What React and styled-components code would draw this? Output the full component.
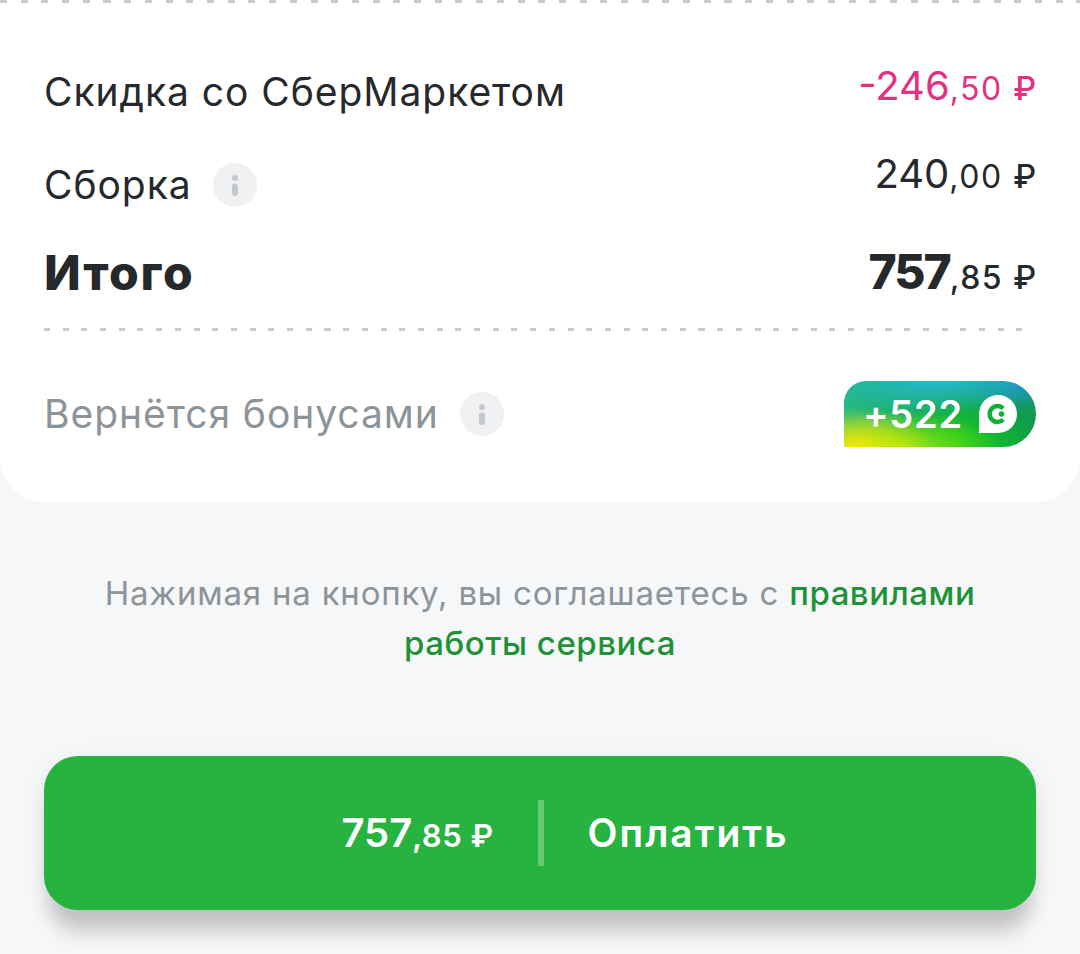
import React from "react"
import styled, { createGlobalStyle } from "styled-components"

const GlobalStyle = createGlobalStyle`
  html, body {
    margin: 0;
    padding: 0;
    background: #f5f7f9;
  }
  body {
    font-family: "Inter", "Noto Sans", sans-serif;
    color: #26292c;
    -webkit-font-smoothing: antialiased;
  }
`

const Page = styled.div`
  width: 1080px;
  height: 954px;
  overflow: hidden;
  background: #f5f7f9;
`

const Card = styled.section`
  height: 502px;
  box-sizing: border-box;
  background: #fff;
  border-radius: 0 0 44px 44px;
  display: flex;
  flex-direction: column;
`

const TopDots = styled.div`
  height: 3px;
  flex: none;
  background: repeating-linear-gradient(90deg, #c6cbd0 0 7px, transparent 7px 20.7px);
`

const Rows = styled.div`
  padding: 0 44px;
  display: flex;
  flex-direction: column;
`

const Row = styled.div`
  display: flex;
  justify-content: space-between;
  align-items: flex-start;
  height: ${(p) => p.$height}px;
`

const Label = styled.div`
  display: flex;
  align-items: center;
  gap: 21px;
  margin-top: ${(p) => p.$top || 0}px;
  font-size: ${(p) => (p.$strong ? 48 : 39)}px;
  line-height: 48px;
  font-weight: ${(p) => (p.$strong ? 800 : 400)};
  color: ${(p) => (p.$muted ? "#8d9499" : "#26292c")};
  letter-spacing: ${(p) => (p.$strong ? "1.8px" : "0.95px")};
`

const Price = styled.div`
  margin-top: ${(p) => p.$top || 0}px;
  font-size: 40px;
  line-height: 48px;
  white-space: nowrap;
  color: ${(p) => p.$color || "#26292c"};
`

const Whole = styled.span`
  font-weight: ${(p) => (p.$strong ? 800 : 400)};
  font-size: ${(p) => (p.$strong ? 48 : 40)}px;
  letter-spacing: ${(p) => (p.$strong ? "-2px" : "0")};
`

const Cents = styled.span`
  font-size: 32px;
  font-weight: ${(p) => (p.$strong ? 500 : 400)};
  letter-spacing: 1.5px;
`

const Rub = styled.span`
  font-weight: 500;
  letter-spacing: 0;
`

const Divider = styled.div`
  height: 3px;
  width: 980px;
  background: repeating-linear-gradient(90deg, #c9cdd0 0 6px, transparent 6px 18.7px);
`

const InfoWrap = styled.span`
  width: 44px;
  height: 44px;
  flex: none;
  border-radius: 50%;
  background: #f0f1f3;
  display: flex;
  align-items: center;
  justify-content: center;
`

const BonusRow = styled.div`
  display: flex;
  justify-content: space-between;
  align-items: center;
  margin-top: 50px;
`

const Badge = styled.div`
  width: 192px;
  height: 66px;
  box-sizing: border-box;
  padding: 0 18px 0 19px;
  border-radius: 22px 33px 33px 0;
  display: flex;
  align-items: center;
  justify-content: space-between;
  color: #fff;
  font-size: 38px;
  font-weight: 600;
  letter-spacing: 0.8px;
  background:
    radial-gradient(ellipse 76px 40px at 6% 100%, #f5ea00 0%, rgba(245, 234, 0, 0) 100%),
    radial-gradient(ellipse 100px 36px at 30% 100%, #9be60c 0%, rgba(155, 230, 12, 0) 100%),
    radial-gradient(ellipse 130px 32px at 50% 0%, #25b8d6 0%, rgba(37, 184, 214, 0) 100%),
    radial-gradient(ellipse 60px 34px at 90% 0%, #1f86b8 0%, rgba(31, 134, 184, 0) 100%),
    radial-gradient(ellipse 80px 44px at 60% 100%, #0acb14 0%, rgba(10, 203, 20, 0) 100%),
    linear-gradient(90deg, #25b884 0%, #12a848 70%, #109a4c 100%);
`

const Terms = styled.p`
  margin: 66px 60px 0;
  font-size: 33px;
  line-height: 50px;
  letter-spacing: 0.8px;
  text-align: center;
  color: #8d9499;
`

const TermsLink = styled.a`
  color: #1f9238;
  text-decoration: none;
  font-weight: 500;
  letter-spacing: 0.5px;
`

const PayButton = styled.button`
  display: flex;
  align-items: center;
  justify-content: center;
  box-sizing: border-box;
  width: 992px;
  height: 154px;
  margin: 88px 44px 0;
  padding: 0 0 2px 50px;
  border: 0;
  border-radius: 34px;
  background: #26b33f;
  color: #fff;
  font-family: inherit;
  box-shadow:
    0 28px 20px -6px rgba(0, 0, 0, 0.19),
    0 4px 24px rgba(0, 0, 0, 0.07);
`

const PayPrice = styled.span`
  font-size: 40px;
  font-weight: 600;
  white-space: nowrap;
`

const PayCents = styled.span`
  font-size: 31px;
  font-weight: 600;
  letter-spacing: 0.5px;
`

const PaySplit = styled.span`
  width: 6px;
  height: 66px;
  margin: 2px 44px 0;
  background: rgba(255, 255, 255, 0.3);
`

const PayLabel = styled.span`
  font-size: 39px;
  font-weight: 600;
  letter-spacing: 2px;
`

const InfoIcon = () => (
  <InfoWrap>
    <svg width="44" height="44" viewBox="0 0 44 44">
      <circle cx="22" cy="15" r="3" fill="#c4c8cc" />
      <rect x="19" y="20.5" width="6" height="12.5" rx="3" fill="#c4c8cc" />
    </svg>
  </InfoWrap>
)

const BonusIcon = () => (
  <svg width="40" height="40" viewBox="0 0 40 40">
    <path d="M20 1a19 19 0 1 1 0 38H1V20A19 19 0 0 1 20 1z" fill="#fff" />
    <path
      d="M25.2 14.3a8 8 0 1 0 0 11.4"
      fill="none"
      stroke="#10b036"
      strokeWidth="4.5"
    />
    <circle cx="23.5" cy="20" r="2.8" fill="#10b036" />
  </svg>
)

const Money = ({ whole, cents, strong }) => (
  <>
    <Whole $strong={strong}>{whole}</Whole>
    <Cents $strong={strong}>
      ,{cents} <Rub>₽</Rub>
    </Cents>
  </>
)

export default function App() {
  return (
    <Page>
      <GlobalStyle />
      <Card>
        <TopDots />
        <Rows>
          <Row $height={88}>
            <Label $top={65}>Скидка со СберМаркетом</Label>
            <Price $top={59} $color="#e5307f">
              <Money whole="-246" cents="50" />
            </Price>
          </Row>
          <Row $height={92}>
            <Label $top={70}>
              Сборка
              <InfoIcon />
            </Label>
            <Price $top={59}>
              <Money whole="240" cents="00" />
            </Price>
          </Row>
          <Row $height={145}>
            <Label $top={66} $strong>
              Итого
            </Label>
            <Price $top={65}>
              <Money whole="757" cents="85" strong />
            </Price>
          </Row>
          <Divider />
          <BonusRow>
            <Label $muted>
              Вернётся бонусами
              <InfoIcon />
            </Label>
            <Badge>
              +522
              <BonusIcon />
            </Badge>
          </BonusRow>
        </Rows>
      </Card>
      <Terms>
        Нажимая на кнопку, вы соглашаетесь с <TermsLink>правилами работы сервиса</TermsLink>
      </Terms>
      <PayButton>
        <PayPrice>
          757<PayCents>,85 ₽</PayCents>
        </PayPrice>
        <PaySplit />
        <PayLabel>Оплатить</PayLabel>
      </PayButton>
    </Page>
  )
}
